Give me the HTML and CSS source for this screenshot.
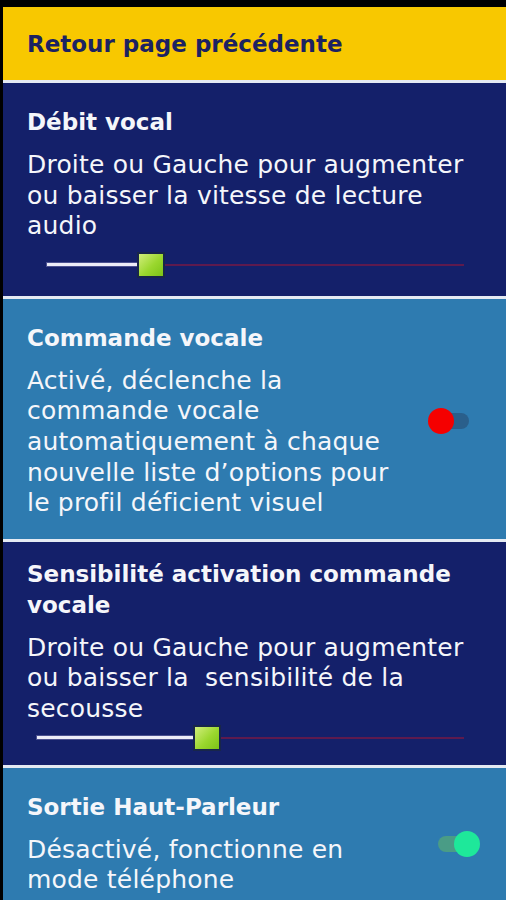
FILE: index.html
```html
<!DOCTYPE html>
<html lang="fr">
<head>
    <meta charset="UTF-8">
    <meta name="viewport" content="width=device-width, initial-scale=1.0">
    <title>Paramètres audio</title>
    <link rel="stylesheet" href="styles.css">
</head>
<body>

    <div class="screen">

        <div class="back-bar">Retour page précédente</div>

        <section class="setting dark">
            <h2 class="setting-title">Débit vocal</h2>
            <p class="setting-text">Droite ou Gauche pour augmenter ou baisser la vitesse de lecture audio</p>
            <div class="slider slider-rate">
                <div class="slider-fill" style="width: 90px;"></div>
                <div class="slider-thumb"></div>
                <div class="slider-rest"></div>
            </div>
        </section>

        <section class="setting light row">
            <div class="setting-body">
                <h2 class="setting-title">Commande vocale</h2>
                <p class="setting-text">Activé, déclenche la commande vocale automatiquement à chaque nouvelle liste d’options pour le profil déficient visuel</p>
            </div>
            <div class="switch off">
                <span class="switch-track"></span>
                <span class="switch-knob"></span>
            </div>
        </section>

        <section class="setting dark compact">
            <h2 class="setting-title">Sensibilité activation commande vocale</h2>
            <p class="setting-text">Droite ou Gauche pour augmenter ou baisser la&nbsp; sensibilité de la secousse</p>
            <div class="slider slider-shake">
                <div class="slider-fill" style="width: 156px;"></div>
                <div class="slider-thumb"></div>
                <div class="slider-rest"></div>
            </div>
        </section>

        <section class="setting light row last">
            <div class="setting-body">
                <h2 class="setting-title">Sortie Haut-Parleur</h2>
                <p class="setting-text">Désactivé, fonctionne en mode téléphone</p>
            </div>
            <div class="switch on">
                <span class="switch-track"></span>
                <span class="switch-knob"></span>
            </div>
        </section>

    </div>

</body>
</html>
```

FILE: styles.css
```css
body {
    margin: 0;
    background-color: #000;
    font-family: 'DejaVu Sans', 'Liberation Sans', sans-serif;
    color: #f5f6fa;
}

/* the black edge of the phone frame */
.screen {
    padding: 7px 0 0 3px;
    height: 893px;
    overflow: hidden;
}


.back-bar {
    background-color: #f8c800;
    color: #1c2261;
    font-size: 23px;
    font-weight: bold;
    line-height: 31px;
    padding: 22px 24px 20px 24px;
    border-bottom: 3px solid #e4eaf3;
}


.setting {
    padding: 24px 30px 18px 24px;
    border-bottom: 3px solid #e4eaf3;
}

.setting.dark {
    background-color: #14206a;
}

.setting.light {
    background-color: #2e7bb0;
    padding-bottom: 20px;
}

.setting.compact {
    padding-top: 17px;
    padding-bottom: 14px;
}

.setting.row {
    display: flex;
    align-items: center;
    gap: 18px;
    padding-right: 26px;
}

.setting.last {
    padding-bottom: 30px;
}

.setting-body {
    flex: 1;
}

.setting-title {
    margin: 0;
    font-size: 23px;
    font-weight: bold;
    line-height: 31px;
}

.setting-text {
    margin: 12px 0 0 0;
    font-size: 25px;
    line-height: 30.6px;
    letter-spacing: 0.2px;
}


/* sliders */
.slider {
    display: flex;
    align-items: center;
    margin-top: 10px;
    margin-right: 12px;
}

.slider-rate {
    margin-left: 20px;
}

.slider-shake {
    margin-left: 10px;
    margin-top: 0;
}

.slider-fill {
    height: 3px;
    background-color: #ececf8;
    box-shadow: 0 0 0 1px #4a5090;
}

.slider-thumb {
    width: 24px;
    height: 22px;
    border: 2px solid #18264a;
    background: linear-gradient(135deg, #d2ee7c 0%, #9ad72e 55%, #7cc317 100%);
}

.slider-rest {
    flex: 1;
    height: 2px;
    background-color: #5e1a4e;
}


/* switches */
.switch {
    position: relative;
    width: 52px;
    height: 26px;
    flex-shrink: 0;
}

.switch-track {
    position: absolute;
    top: 5px;
    height: 16px;
    border-radius: 8px;
}

.switch-knob {
    position: absolute;
    top: 0;
    width: 26px;
    height: 26px;
    border-radius: 50%;
}

.switch.off .switch-track {
    left: 2px;
    right: 11px;
    background-color: #2a5f8b;
}

.switch.off .switch-knob {
    left: 0;
    background-color: #f50000;
}

.switch.on .switch-track {
    left: 10px;
    right: 3px;
    background-color: #4a9c86;
}

.switch.on .switch-knob {
    right: 0;
    background-color: #1ee89a;
}
```
